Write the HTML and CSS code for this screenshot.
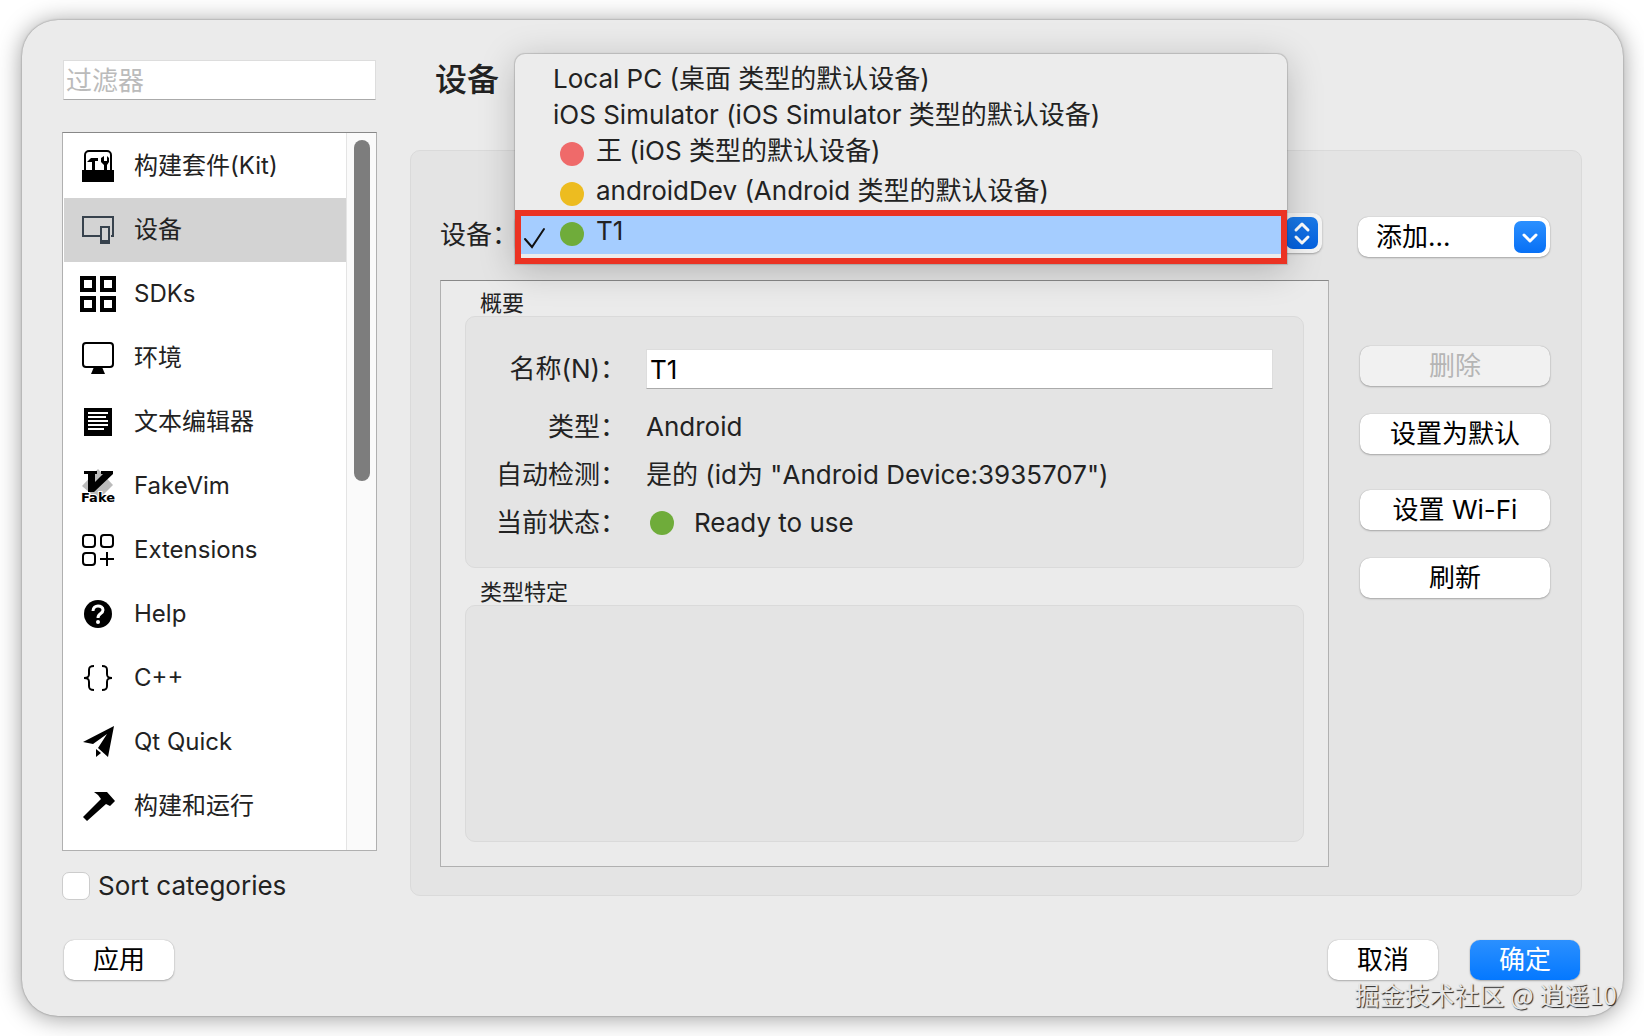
FILE: index.html
```html
<!DOCTYPE html>
<html lang="zh-CN">
<head>
    <meta charset="UTF-8">
    <meta name="viewport" content="width=device-width, initial-scale=1.0">
    <title>设备</title>
    <link rel="stylesheet" href="styles.css">
</head>
<body>
    <div class="window">
        <div class="content">
            <div class="side">
                <input class="filter" type="text" placeholder="过滤器" aria-label="过滤器">
                <div class="list">
                    <ul class="menu">
                        <li>
                            <svg viewBox="0 0 36 36"><path d="M5 22V7a4 4 0 0 1 4-4h18a4 4 0 0 1 4 4v15" fill="none" stroke="#000" stroke-width="2"/><path d="M2 22h32v12H2z"/><path d="M7 14l4-4h7v3h-3v9h-3v-8zM21 10v4l3 3v5h3v-5l2-3v-4l-2-2v5h-3V8z"/></svg>
                            构建套件(Kit)
                        </li>
                        <li class="active">
                            <svg viewBox="0 0 36 36" fill="none" stroke="#37424d" stroke-width="2"><path d="M20 24H3V5h30v19h-2"/><path d="M21 15h8v14h-8z"/><path d="M20 28h10v4H20z" fill="#37424d" stroke="none"/></svg>
                            设备
                        </li>
                        <li>
                            <svg viewBox="0 0 36 36" fill="none" stroke="#000" stroke-width="4"><path d="M2 2h12v12H2zM22 2h12v12H22zM2 22h12v12H2zM22 22h12v12H22z"/></svg>
                            SDKs
                        </li>
                        <li>
                            <svg viewBox="0 0 36 36"><rect x="3" y="3" width="30" height="24" rx="3" fill="none" stroke="#000" stroke-width="2"/><path d="M14 27h8l3 7H11z"/></svg>
                            环境
                        </li>
                        <li>
                            <svg viewBox="0 0 36 36"><path d="M4 4h28v28H4z"/><path d="M8 9h20M8 13h18M8 17h20M8 21h20M8 25h16" stroke="#fff" stroke-width="2"/></svg>
                            文本编辑器
                        </li>
                        <li>
                            <svg viewBox="0 0 36 36"><path d="M18 1l15 16-15 15L2 18z" fill="#bbb"/><path d="M4 3h13v3h-2v8l8-8h-2V3h12v3L14 24H8V6H4z"/><text x="1" y="34" class="fake">Fake</text></svg>
                            FakeVim
                        </li>
                        <li>
                            <svg viewBox="0 0 36 36" fill="none" stroke="#000" stroke-width="2"><rect x="3" y="3" width="12" height="12" rx="3"/><rect x="21" y="3" width="12" height="12" rx="3"/><rect x="3" y="21" width="12" height="12" rx="3"/><path d="M20 27h14M27 20v14"/></svg>
                            Extensions
                        </li>
                        <li>
                            <svg viewBox="0 0 36 36"><circle cx="18" cy="18" r="14"/><path d="M13 15c0-7 10-6 10-1 0 4-5 3-5 8" fill="none" stroke="#fff" stroke-width="3"/><circle cx="18" cy="26" r="2" fill="#fff"/></svg>
                            Help
                        </li>
                        <li>
                            <svg viewBox="0 0 36 36" fill="none" stroke="#000" stroke-width="2"><path d="M14 6c-4 0-5 1-5 4v4c0 3-1 4-5 4 4 0 5 1 5 4v4c0 3 1 4 5 4M22 6c4 0 5 1 5 4v4c0 3 1 4 5 4-4 0-5 1-5 4v4c0 3-1 4-5 4"/></svg>
                            C++
                        </li>
                        <li>
                            <svg viewBox="0 0 36 36"><path d="M34 2l-6 31-10-9 9-14-14 10-10-2zM16 25l5 4-5 4z"/></svg>
                            Qt Quick
                        </li>
                        <li>
                            <svg viewBox="0 0 36 36"><path d="M14 4h13l8 9-5 5-4-2L7 33l-4-4 18-18-3-4z"/></svg>
                            构建和运行
                        </li>
                    </ul>
                    <div class="track"><div class="thumb"></div></div>
                </div>
                <label class="sort"><input type="checkbox">Sort categories</label>
            </div>

            <div class="main">
                <h1>设备</h1>
                <div class="panel">
                    <div class="device">
                        <label for="device">设备：</label>
                        <div class="combo">
                            <select id="device">
                                <option>Local PC (桌面 类型的默认设备)</option>
                                <option>iOS Simulator (iOS Simulator 类型的默认设备)</option>
                                <option>王 (iOS 类型的默认设备)</option>
                                <option>androidDev (Android 类型的默认设备)</option>
                                <option selected>T1</option>
                            </select>
                            <svg class="arrow" viewBox="0 0 32 32"><path d="M10 13l6-6 6 6M10 20l6 6 6-6"/></svg>
                            <ul class="popup">
                                <li>Local PC (桌面 类型的默认设备)</li>
                                <li>iOS Simulator (iOS Simulator 类型的默认设备)</li>
                                <li class="dev"><i class="dot red"></i><span>王 (iOS 类型的默认设备)</span></li>
                                <li class="dev"><i class="dot yellow"></i><span>androidDev (Android 类型的默认设备)</span></li>
                                <li class="dev checked">
                                    <svg class="tick" viewBox="0 0 24 24"><path d="M2 13l7 8L21 3"/></svg>
                                    <i class="dot green"></i><span>T1</span>
                                </li>
                            </ul>
                        </div>
                    </div>
                    <button class="add" type="button">添加...
                        <svg class="arrow" viewBox="0 0 32 32"><path d="M10 14l6 6 6-6"/></svg>
                    </button>

                    <div class="detail">
                        <h2>概要</h2>
                        <div class="group">
                            <div class="row name">
                                <label for="name">名称(N)：</label>
                                <input id="name" type="text" value="T1">
                            </div>
                            <div class="row">
                                <span class="key">类型：</span>
                                <span>Android</span>
                            </div>
                            <div class="row">
                                <span class="key">自动检测：</span>
                                <span>是的 (id为 "Android Device:3935707")</span>
                            </div>
                            <div class="row">
                                <span class="key">当前状态：</span>
                                <i class="dot green"></i>
                                <span>Ready to use</span>
                            </div>
                        </div>
                        <h2 class="second">类型特定</h2>
                        <div class="group rest"></div>
                    </div>

                    <div class="actions">
                        <button type="button" disabled>删除</button>
                        <button type="button">设置为默认</button>
                        <button type="button" class="wifi">设置 Wi-Fi</button>
                        <button type="button">刷新</button>
                    </div>
                </div>
            </div>
        </div>

        <div class="footer">
            <button type="button">应用</button>
            <button type="button" class="cancel">取消</button>
            <button type="button" class="ok">确定</button>
        </div>
        <div class="mark">掘金技术社区 @ 逍遥10</div>
    </div>
</body>
</html>
```
FILE: styles.css
```css
*{
    margin: 0;
    padding: 0;
    list-style: none;
    box-sizing: border-box;
}
body{
    display: flex;
    min-height: 100vh;
    padding: 20px 21px 20px 22px;
    background-color: #fff;
    color: #222;
    font-family: Inter, "Noto Sans CJK SC", sans-serif;
    font-size: 26px;
    line-height: 36px;
}
input,button,select{
    font: inherit;
    color: #000;
}
.window{
    flex: 1;
    display: flex;
    flex-direction: column;
    position: relative;
    padding: 40px 41px 36px 40px;
    background-color: #ebebeb;
    border-radius: 36px;
    box-shadow: 0 0 2px rgba(0,0,0,.4), 0 2px 24px rgba(0,0,0,.4);
}
.content{
    flex: 1;
    display: flex;
    gap: 33px;
}

/* left side */
.side{
    width: 315px;
    flex-shrink: 0;
    display: flex;
    flex-direction: column;
}
.filter{
    height: 40px;
    margin: 0 1px 32px;
    padding: 0 2px;
    background-color: #fff;
    border: 1px solid #ddd;
    border-bottom: 1px solid #aaa;
}
.filter::placeholder{
    color: #bbb;
}
.list{
    flex: 1;
    display: flex;
    background-color: #fff;
    border: 1px solid #b0b0b0;
    border-top-color: #888;
    overflow: hidden;
}
.menu{
    flex: 1;
    padding: 1px 0 0 1px;
    font-size: 24px;
}
.menu li{
    display: flex;
    align-items: center;
    gap: 18px;
    height: 64px;
    padding-left: 16px;
}
.menu .active{
    background-color: #d3d3d3;
}
.menu svg{
    width: 36px;
    height: 36px;
}
.fake{
    font: bold 13px "DejaVu Sans", sans-serif;
    stroke: #fff;
    stroke-width: 2px;
    paint-order: stroke;
}
.track{
    width: 30px;
    padding: 7px 6px 0 7px;
    background-color: #fafafa;
    border-left: 1px solid #e4e4e4;
}
.thumb{
    width: 16px;
    height: 48%;
    background-color: #7d7d7d;
    border-radius: 8px;
}
.sort{
    display: flex;
    align-items: center;
    gap: 8px;
    height: 28px;
    margin-top: 21px;
}
.sort input{
    appearance: none;
    width: 28px;
    height: 28px;
    background-color: #fff;
    border: 1px solid #ccc;
    border-radius: 7px;
}

/* right side */
.main{
    flex: 1;
    display: flex;
    flex-direction: column;
    margin-bottom: 4px;
}
h1{
    margin: 0 0 50px 25px;
    font-size: 32px;
    line-height: 40px;
    font-weight: 500;
}
.panel{
    flex: 1;
    display: grid;
    grid-template-columns: 1fr 192px;
    grid-template-rows: 44px 1fr;
    gap: 23px 29px;
    padding: 62px 31px 28px 29px;
    background-color: #e4e4e4;
    border: 1px solid #dadada;
    border-radius: 10px;
}
.device{
    display: flex;
    align-items: center;
    padding-right: 7px;
}
.device label{
    width: 75px;
    white-space: nowrap;
}
.combo{
    flex: 1;
    align-self: flex-start;
    position: relative;
    height: 40px;
}
.combo select{
    appearance: none;
    width: 100%;
    height: 40px;
    padding-left: 16px;
    background-color: #f4f4f4;
    border: 0;
    border-radius: 9px;
    box-shadow: 0 1px 2px rgba(0,0,0,.3);
}
.arrow{
    width: 32px;
    height: 32px;
    background: linear-gradient(#2b90ff, #0870f5);
    border-radius: 7px;
    fill: none;
    stroke: #fff;
    stroke-width: 3;
    stroke-linecap: round;
    stroke-linejoin: round;
}
.combo .arrow{
    position: absolute;
    top: 4px;
    right: 4px;
    background: linear-gradient(#1b7ae8, #0461e0);
    pointer-events: none;
}
.popup{
    position: absolute;
    left: 0;
    right: 35px;
    bottom: -11px;
    padding-top: 8px;
    background-color: #ececec;
    border-radius: 10px 10px 0 0;
    box-shadow: 0 0 1px 1px rgba(0,0,0,.15), 0 6px 36px rgba(0,0,0,.22);
}
.popup li{
    height: 36px;
    padding-left: 38px;
    line-height: 34px;
    white-space: nowrap;
}
.popup .dev{
    display: flex;
    align-items: center;
    gap: 12px;
    height: 40px;
    padding-left: 45px;
}
.popup .dev span{
    padding-bottom: 6px;
}
.popup .checked{
    position: relative;
    height: 54px;
    margin-top: -4px;
    padding: 0 0 6px 39px;
    border: 6px solid #eb3323;
    background: linear-gradient(#a5cdff 38px, #ececec 38px);
}
.tick{
    position: absolute;
    left: 2px;
    top: 10px;
    width: 24px;
    height: 24px;
    fill: none;
    stroke: #111;
    stroke-width: 2;
    stroke-linecap: round;
}
.dot{
    width: 24px;
    height: 24px;
    border-radius: 50%;
}
.red{
    background-color: #ef6a6a;
}
.yellow{
    background-color: #edbc20;
}
.green{
    background-color: #6fac3a;
}
button{
    height: 40px;
    background-color: #fff;
    border: 0;
    border-radius: 10px;
    box-shadow: 0 0 1px rgba(0,0,0,.3), 0 1px 2px rgba(0,0,0,.25);
}
.add{
    align-self: end;
    display: flex;
    align-items: center;
    justify-content: space-between;
    padding: 0 4px 0 18px;
}
.detail{
    display: flex;
    flex-direction: column;
    padding: 10px 24px 24px;
    background-color: #ebebeb;
    border: 1px solid #b0b0b0;
    border-top-color: #888;
}
h2{
    padding-left: 15px;
    font-size: 22px;
    line-height: 25px;
    font-weight: 400;
}
.second{
    margin-top: 12px;
}
.group{
    padding: 32px 30px 20px 0;
    background-color: #e4e4e4;
    border: 1px solid #dadada;
    border-radius: 10px;
}
.rest{
    flex: 1;
}
.row{
    display: flex;
    align-items: center;
    height: 48px;
}
.row label,
.row .key{
    width: 160px;
    margin-right: 20px;
    text-align: right;
}
.row .dot{
    margin: 0 20px 0 4px;
}
.name{
    height: 40px;
    margin-bottom: 14px;
}
.name input{
    flex: 1;
    height: 40px;
    padding: 0 3px;
    background-color: #fff;
    border: 1px solid #ddd;
    border-bottom-color: #aaa;
}
.actions{
    display: flex;
    flex-direction: column;
    gap: 28px;
    padding: 66px 0 0 2px;
}
.actions .wifi{
    margin-top: 8px;
}
button:disabled{
    color: #b5b5b5;
    background-color: #f1f1f1;
}

/* bottom buttons */
.footer{
    display: flex;
    gap: 32px;
    margin-top: 40px;
    padding: 0 2px;
}
.footer button{
    width: 110px;
}
.footer .cancel{
    margin-left: auto;
}
.footer .ok{
    color: #fff;
    background: linear-gradient(#2b90ff, #0478ff);
}
.mark{
    position: absolute;
    right: 6px;
    bottom: 4px;
    color: #e6e6e6;
    font-family: "Noto Sans CJK SC", sans-serif;
    font-size: 25px;
    text-shadow: 1px 1px 1px #222;
}
```
